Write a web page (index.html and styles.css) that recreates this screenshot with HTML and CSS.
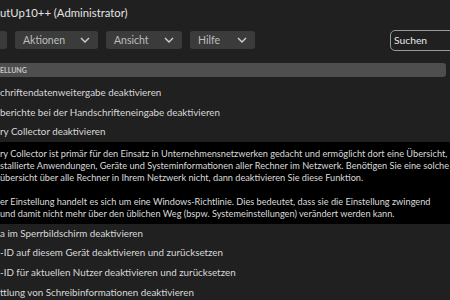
FILE: index.html
```html
<!DOCTYPE html>
<html lang="de">
<head>
<meta charset="utf-8">
<link rel="stylesheet" href="styles.css">
</head>
<body>
<div class="app">
  <div class="titlebar">utUp10++ (Administrator)</div>
  <div class="toolbar">
    <div class="btn btn-partial"></div>
    <div class="btn btn-aktionen"><span>Aktionen</span><svg class="chev" viewBox="0 0 10 6"><path d="M1 1 L5 5 L9 1" /></svg></div>
    <div class="btn btn-ansicht"><span>Ansicht</span><svg class="chev" viewBox="0 0 10 6"><path d="M1 1 L5 5 L9 1" /></svg></div>
    <div class="btn btn-hilfe"><span>Hilfe</span><svg class="chev" viewBox="0 0 10 6"><path d="M1 1 L5 5 L9 1" /></svg></div>
    <div class="spacer"></div>
    <div class="search">Suchen</div>
  </div>
  <div class="section">ELLUNG</div>
  <div class="list">
    <div class="row">chriftendatenweitergabe deaktivieren</div>
    <div class="row">berichte bei der Handschrifteneingabe deaktivieren</div>
    <div class="row row-selected">ry Collector deaktivieren</div>
    <div class="desc">
      <p>ry Collector ist primär für den Einsatz in Unternehmensnetzwerken gedacht und ermöglicht dort eine Übersicht,<br>stallierte Anwendungen, Geräte und Systeminformationen aller Rechner im Netzwerk. Benötigen Sie eine solche<br>übersicht über alle Rechner in Ihrem Netzwerk nicht, dann deaktivieren Sie diese Funktion.</p>
      <p>er Einstellung handelt es sich um eine Windows-Richtlinie. Dies bedeutet, dass sie die Einstellung zwingend<br>und damit nicht mehr über den üblichen Weg (bspw. Systemeinstellungen) verändert werden kann.</p>
    </div>
    <div class="row">a im Sperrbildschirm deaktivieren</div>
    <div class="row">-ID auf diesem Gerät deaktivieren und zurücksetzen</div>
    <div class="row">-ID für aktuellen Nutzer deaktivieren und zurücksetzen</div>
    <div class="row">ttlung von Schreibinformationen deaktivieren</div>
  </div>
</div>
</body>
</html>
```
FILE: styles.css
```css
html, body {
  margin: 0;
  padding: 0;
  background: #202020;
}
.app {
  width: 450px;
  height: 300px;
  overflow: hidden;
  background: #202020;
  font-family: Lato, "Open Sans", sans-serif;
  color: #d6d6d6;
}
.titlebar {
  height: 26px;
  line-height: 26px;
  font-size: 11.3px;
  color: #e4e4e4;
}
.toolbar {
  display: flex;
  align-items: center;
  gap: 8px;
  height: 26px;
  margin-top: 1px;
}
.btn {
  height: 18px;
  background: #3b3b3b;
  border-radius: 3px;
  display: flex;
  align-items: center;
  justify-content: space-between;
  padding: 0 8px 0 8px;
  box-sizing: border-box;
  font-size: 10.5px;
  color: #bdbdbd;
}
.btn-partial {
  width: 14px;
  margin-left: -9px;
}
.btn-aktionen { width: 83px; }
.btn-ansicht { width: 76px; }
.btn-hilfe { width: 65px; }
.chev {
  width: 10px;
  height: 6px;
  fill: none;
  stroke: #cfcfcf;
  stroke-width: 1.4;
}
.spacer { flex: 1; }
.search {
  width: 80px;
  height: 21px;
  margin-right: -20px;
  border: 1px solid #9a9a9a;
  border-radius: 5px;
  box-sizing: border-box;
  font-size: 10.3px;
  color: #e6e6e6;
  padding-left: 3px;
  line-height: 19px;
}
.section {
  margin-top: 10px;
  height: 14px;
  line-height: 14px;
  background: #4e4e4e;
  border-radius: 0 3px 3px 0;
  margin-right: 4px;
  font-size: 7px;
  font-weight: 700;
  color: #c4c4c4;
}
.list {
  margin-top: 6px;
}
.row {
  height: 19.6px;
  line-height: 19.6px;
  font-size: 9.8px;
  color: #d8d8d8;
  white-space: nowrap;
}
.desc {
  background: #000;
  color: #dadada;
  font-size: 9.2px;
  line-height: 12px;
  padding: 6px 0 4px;
  white-space: nowrap;
}
.desc p {
  margin: 0 0 12px 0;
}
.desc p:last-child { margin-bottom: 0; }
```
